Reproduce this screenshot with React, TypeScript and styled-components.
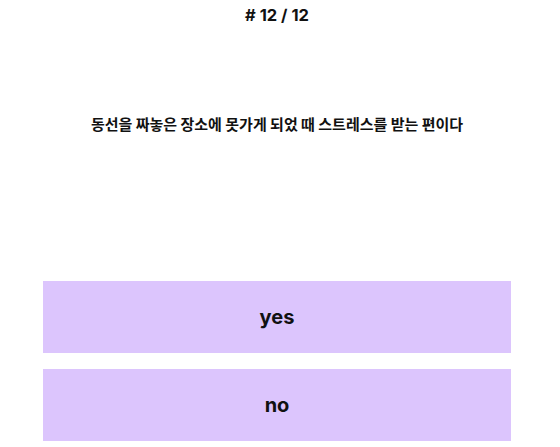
import React from "react";
import styled, { createGlobalStyle } from "styled-components";

const Global = createGlobalStyle`
  html, body { margin: 0; padding: 0; background: #ffffff; }
  body { font-family: Inter, "Noto Sans CJK KR", sans-serif; color: #111; }
`;

const Page = styled.div`
  width: 554px;
  display: flex;
  flex-direction: column;
  align-items: center;
`;

const Counter = styled.h1`
  margin: 4px 0 0;
  font-size: 16.5px;
  line-height: 22px;
  font-weight: 700;
  font-family: Inter, "Noto Sans CJK KR", sans-serif;
`;

const Question = styled.p`
  margin: 86px 0 0;
  font-size: 15px;
  line-height: 24px;
  font-weight: 700;
  font-family: "Noto Sans CJK KR", sans-serif;
`;

const Answers = styled.div`
  margin-top: 145px;
  width: 468px;
  display: flex;
  flex-direction: column;
  gap: 16px;
`;

const AnswerButton = styled.button`
  height: 72px;
  border: none;
  background: #dcc5fd;
  font-family: Inter, sans-serif;
  font-size: 20px;
  font-weight: 700;
  color: #111;
  cursor: pointer;
`;

export default function App() {
  return (
    <>
      <Global />
      <Page>
        <Counter># 12 / 12</Counter>
        <Question>동선을 짜놓은 장소에 못가게 되었 때 스트레스를 받는 편이다</Question>
        <Answers>
          <AnswerButton>yes</AnswerButton>
          <AnswerButton>no</AnswerButton>
        </Answers>
      </Page>
    </>
  );
}
